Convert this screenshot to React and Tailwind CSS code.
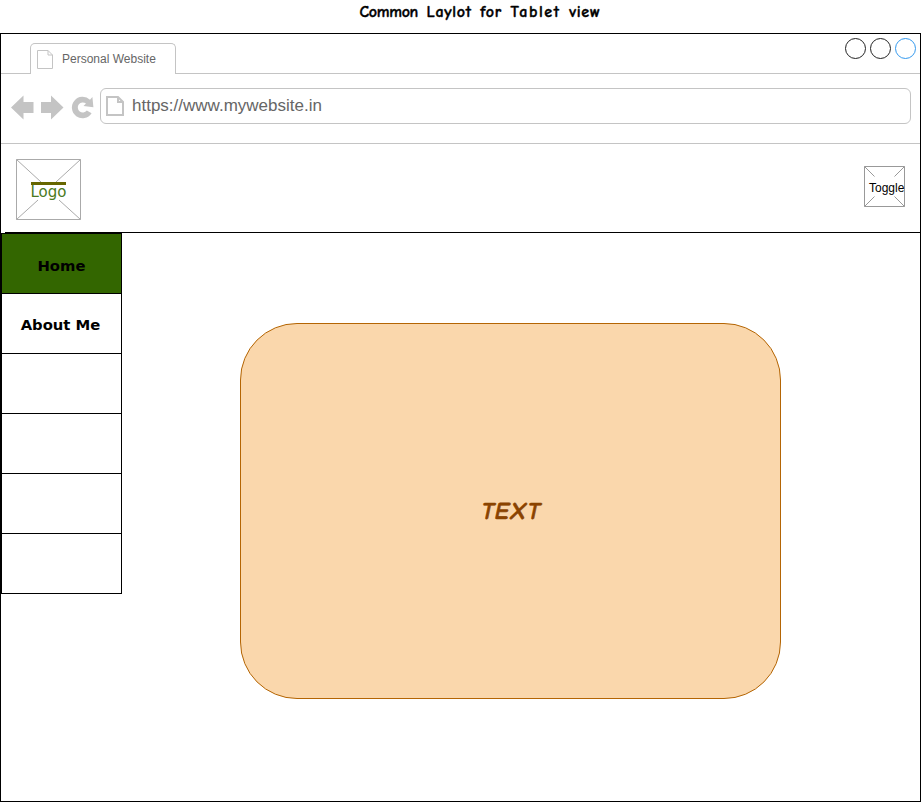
import React from "react";

const menuItems = ["Home", "About Me", "", "", "", ""];

function PageIcon({ className, strokeWidth }) {
  return (
    <svg viewBox="0 0 18 20" className={className} fill="none" stroke="#c4c4c4" strokeWidth={strokeWidth}>
      <path d={strokeWidth === "1" ? "M1.5 .5H12L16.5 5V18.5H1.5ZM12 .5V5H16.5" : "M1 1H12L17 6V19H1ZM12 1V6H17"} />
    </svg>
  );
}

function TabStrip() {
  return (
    <div className="flex h-10">
      <div className="w-[29px] border-b border-[#c4c4c4]" />
      <div className="mt-[9px] flex w-[146px] items-start rounded-t-[5px] border border-b-0 border-[#c4c4c4] pl-[5px] pt-[6px]">
        <PageIcon className="h-5 w-[18px] shrink-0" strokeWidth="1" />
        <span className="ml-2 whitespace-nowrap text-[12px] leading-[18px] text-[#666666]">Personal Website</span>
      </div>
      <div className="flex grow justify-end gap-1 border-b border-[#c4c4c4] pr-1 pt-1">
        <div className="size-[21px] rounded-full border border-[#222222]" />
        <div className="size-[21px] rounded-full border border-[#222222]" />
        <div className="size-[21px] rounded-full border border-[#3399ee]" />
      </div>
    </div>
  );
}

function Toolbar() {
  return (
    <div className="flex h-[70px] items-start border-b border-[#c4c4c4] pl-[10px] pt-[14px]">
      <svg viewBox="0 0 84 36" className="h-9 w-[84px] shrink-0" fill="#c4c4c4">
        <path d="M0 19.5L12.5 7.5V14H22.5V25H12.5V31.5Z" />
        <path d="M52.5 19.5L40 7.5V14H30V25H40V31.5Z" />
        <path d="M79 11.8L81.4 9L82.4 19.2L72.5 18L75 15.6A5 5 0 1 0 75.8 22.4L80.6 25.3A10.7 10.7 0 1 1 79 11.8Z" />
      </svg>
      <div className="ml-[5px] flex h-9 w-[811px] rounded-[6px] border border-[#c4c4c4] pl-[5px] pt-[7px]">
        <PageIcon className="h-5 w-[18px] shrink-0" strokeWidth="2" />
        <span className="ml-2 text-[17px] leading-[20px] text-[#666666]">https://www.mywebsite.in</span>
      </div>
    </div>
  );
}

function Header() {
  return (
    <header className="flex h-[89px] justify-between pl-[15px] pr-[15px]">
      <div className="relative mt-[15px] h-[61px] w-[65px]">
        <svg viewBox="0 0 65 61" className="h-[61px] w-[65px]" fill="none" stroke="#aaaaaa">
          <path d="M.5 .5H64.5V60.5H.5ZM.5 .5L25 23M64.5 .5L40 23M.5 60.5L22 41M64.5 60.5L43 41" />
        </svg>
        <div className="absolute left-[15px] top-[23px] flex w-[35px] justify-center border-t-[3px] border-[#666600] font-['DejaVu_Sans',sans-serif] text-[15px] leading-[14px] text-[#4a7a22]">
          Logo
        </div>
      </div>
      <div className="relative mt-[22px] h-[41px] w-[41px]">
        <svg viewBox="0 0 41 41" className="size-[41px]" fill="none" stroke="#999999">
          <path d="M.5 .5H40.5V40.5H.5ZM.5 .5L10.5 10.5M40.5 .5L30.5 10.5M.5 40.5L10.5 30.5M40.5 40.5L30.5 30.5" />
        </svg>
        <span className="absolute left-[5px] top-[15px] text-[12px] leading-[15px] text-black">Toggle</span>
      </div>
    </header>
  );
}

function SideMenu() {
  return (
    <nav className="h-[361px] w-[121px] border-x border-t border-black">
      {menuItems.map((label, index) => (
        <div
          key={index}
          className={`flex h-[60px] items-center justify-center border-b border-black font-['DejaVu_Sans',sans-serif] text-[14.8px] font-bold text-black ${index === 0 ? "bg-[#336600] pt-[5px]" : "pr-[2px] pt-[3px]"}`}
        >
          {label}
        </div>
      ))}
    </nav>
  );
}

export default function App() {
  return (
    <div className="h-[802px] w-[922px] overflow-hidden bg-white font-['Liberation_Sans',Arial,sans-serif]">
      <h1 className="h-[33px] pl-[38px] pt-[2px] text-center font-['Comic_Sans_MS','Comic_Neue',Lato,sans-serif] text-[16px] font-black leading-[20px] tracking-[0.7px] text-black [-webkit-text-stroke:0.4px_black] [word-spacing:2.2px]">
        <span className="tracking-[-0.3px]">Common</span> Laylot for <span className="tracking-[1.6px]">Tablet</span> view
      </h1>
      <div className="h-[769px] w-[921px] border border-black">
        <TabStrip />
        <Toolbar />
        <Header />
        <div className="-mt-px ml-1 h-px w-[915px] bg-black" />
        <main className="flex">
          <SideMenu />
          <section className="ml-[118px] mt-[90px] flex h-[376px] w-[541px] items-center justify-center rounded-[57px] border border-[#b46504] bg-[#fad7ac] pl-[2px]">
            <span className="inline-block -skew-x-12 font-['Comic_Sans_MS','Comic_Neue',Lato,sans-serif] text-[24px] font-black leading-[30px] tracking-[0.7px] text-[#8a4300] [-webkit-text-stroke:0.6px_#8a4300]">TEXT</span>
          </section>
        </main>
      </div>
    </div>
  );
}
